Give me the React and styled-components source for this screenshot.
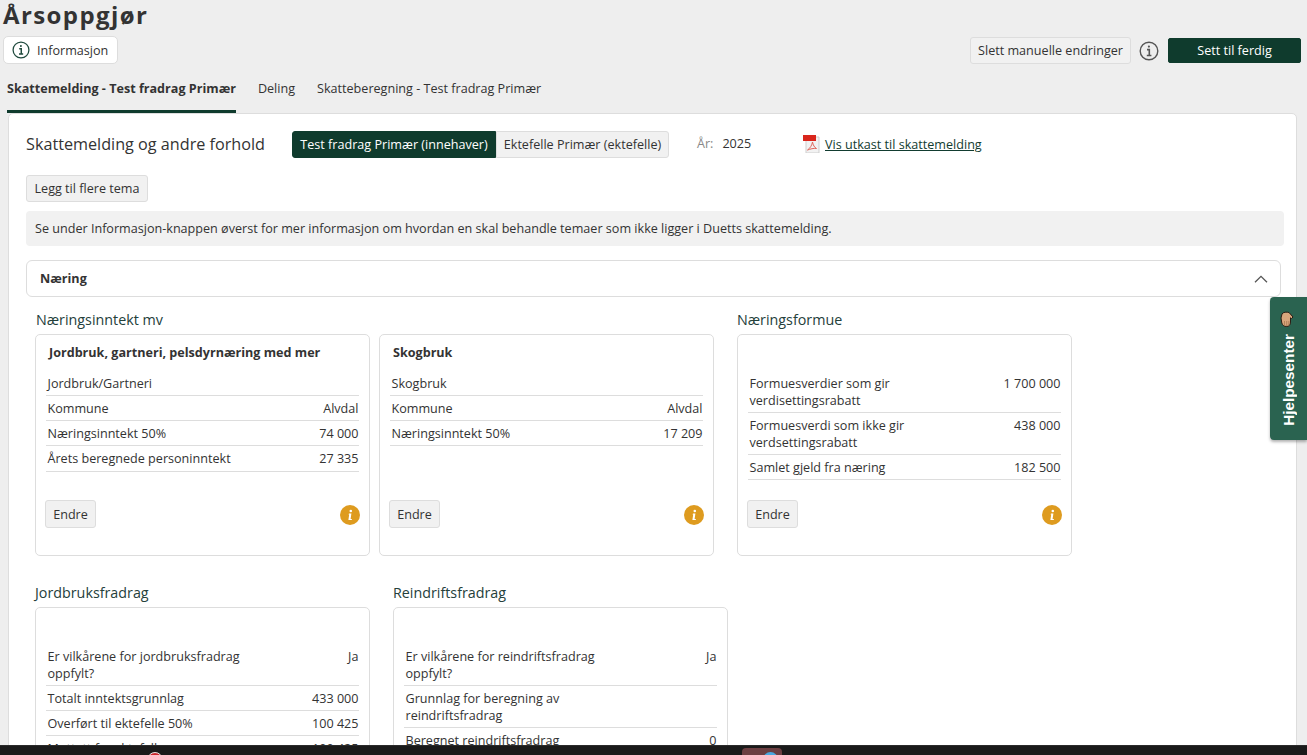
import styled, { createGlobalStyle } from 'styled-components';

const GlobalStyle = createGlobalStyle`
  html, body {
    margin: 0;
    padding: 0;
    height: 100%;
    overflow: hidden;
    background: #eeeeee;
    font-family: 'Open Sans', sans-serif;
    font-size: 12.6px;
    color: #333333;
  }
  * { box-sizing: border-box; }
`;

const Page = styled.div`
  height: 755px;
  display: flex;
  flex-direction: column;
  overflow: hidden;
  position: relative;
`;

const Scroll = styled.div`
  flex: 1;
  min-height: 0;
  overflow: hidden;
  padding: 0 10px 0 8px;
`;

const Title = styled.h1`
  margin: 0 0 0 -5px;
  height: 36px;
  font-size: 24px;
  line-height: 30px;
  font-weight: 700;
  letter-spacing: 1.4px;
  color: #333333;
`;

const HeaderRow = styled.div`
  display: flex;
  justify-content: space-between;
  align-items: flex-start;
  height: 37px;
  margin-left: -5px;
  margin-right: -4px;
`;

const InfoButton = styled.button`
  display: flex;
  align-items: center;
  gap: 7px;
  height: 28px;
  width: 115px;
  padding: 0 0 0 8px;
  background: #ffffff;
  border: 1px solid #dddddd;
  border-radius: 5px;
  font: 12.6px 'Open Sans', sans-serif;
  color: #333333;
`;

const Actions = styled.div`
  display: flex;
  align-items: center;
  margin-top: 1px;
`;

const Button = styled.button`
  width: ${p => p.$width}px;
  height: ${p => p.$height || 27}px;
  padding: 0;
  background: #f1f1f1;
  border: 1px solid #dddddd;
  border-radius: 3px;
  font: 12.6px 'Open Sans', sans-serif;
  color: #333333;
`;

const PrimaryButton = styled.button`
  width: 133px;
  height: 25px;
  margin-left: 9px;
  background: #0f3b2d;
  border: 1px solid #0f3b2d;
  border-radius: 2px;
  font: 12.6px 'Open Sans', sans-serif;
  color: #ffffff;
`;

const HelpIcon = styled.span`
  display: flex;
  margin-left: 8px;
`;

const Tabs = styled.nav`
  display: flex;
  gap: 22px;
  height: 40px;
  margin-left: -1px;
`;

const Tab = styled.div`
  height: 40px;
  padding-top: 7px;
  line-height: 17px;
  font-weight: ${p => p.$active ? 700 : 400};
  border-bottom: 3px solid ${p => p.$active ? '#0f3b2d' : 'transparent'};
  color: #333333;
`;

const Panel = styled.main`
  background: #ffffff;
  border: 1px solid #dddddd;
  border-radius: 5px 5px 0 0;
  padding: 16px 12px 0 17px;
  height: 800px;
`;

const PanelTop = styled.div`
  display: flex;
  align-items: center;
  height: 28px;
`;

const PanelHeading = styled.h2`
  margin: -1px 0 0;
  width: 266px;
  font-size: 16.2px;
  font-weight: 400;
  color: #333333;
`;

const Toggle = styled.div`
  display: flex;
  width: 377px;
  height: 27px;
`;

const ToggleItem = styled.div`
  display: flex;
  align-items: center;
  justify-content: center;
  flex: ${p => p.$active ? '0 0 204px' : '1'};
  background: ${p => p.$active ? '#0f3b2d' : '#f1f1f1'};
  color: ${p => p.$active ? '#ffffff' : '#333333'};
  border: 1px solid ${p => p.$active ? '#0f3b2d' : '#dddddd'};
  border-radius: ${p => p.$active ? '3px 0 0 3px' : '0 3px 3px 0'};
`;

const Year = styled.div`
  display: flex;
  gap: 9px;
  width: 106px;
  margin-left: 28px;
  margin-top: -2px;
`;

const YearLabel = styled.span`
  color: #888888;
`;

const PdfWrap = styled.div`
  display: flex;
  align-items: center;
  gap: 5px;
`;

const PdfLink = styled.a`
  color: #123c30;
  text-decoration: underline;
`;

const AddRow = styled.div`
  margin-top: 17px;
`;

const Notice = styled.div`
  display: flex;
  align-items: center;
  height: 35px;
  margin: 9px 0 14px;
  padding-left: 9px;
  background: #f1f1f1;
  border-radius: 4px;
`;

const Accordion = styled.div`
  display: flex;
  align-items: center;
  justify-content: space-between;
  height: 37px;
  width: 1255px;
  padding: 0 12px 0 13px;
  border: 1px solid #dddddd;
  border-radius: 6px;
  font-weight: 700;
`;

const Groups = styled.div`
  display: flex;
  gap: 23px;
  padding-left: 9px;
`;

const Group = styled.section`
  display: flex;
  flex-direction: column;
`;

const GroupTitle = styled.h3`
  margin: 0;
  height: 37px;
  padding: 13px 0 0 ${p => p.$indent ?? 1}px;
  font-size: 14.3px;
  line-height: 19px;
  font-weight: 400;
  color: #24403b;
`;

const Cards = styled.div`
  display: flex;
  gap: 9px;
`;

const Card = styled.article`
  position: relative;
  width: 335px;
  height: 222px;
  padding: 0 10px;
  border: 1px solid #dddddd;
  border-radius: 5px;
  background: #ffffff;
`;

const CardTitle = styled.div`
  height: 36px;
  padding: 9px 0 0 3px;
  line-height: 17px;
  font-weight: 700;
`;

const Row = styled.div`
  display: flex;
  justify-content: space-between;
  padding: 4px 0.5px ${p => p.$tall ? 4 : 3}px 1.5px;
  line-height: 17px;
  border-bottom: 1px solid #dddddd;
`;

const RowLabel = styled.span`
  max-width: 205px;
`;

const CardFooter = styled.div`
  position: absolute;
  left: 9px;
  right: 9px;
  top: 165px;
  display: flex;
  justify-content: space-between;
  align-items: flex-start;
`;

const Dot = styled.span`
  display: flex;
  margin-top: 5px;
`;

const Spacer = styled.div`
  height: 14px;
`;

const BottomBar = styled.div`
  flex: 0 0 10px;
  position: relative;
  background: #1a1a1a;
  border-top: 1px solid #2b2b2b;
  overflow: hidden;
`;

const RedDot = styled.span`
  position: absolute;
  left: 147px;
  top: 6px;
  width: 16px;
  height: 16px;
  border-radius: 50%;
  background: #c9262c;
  border: 1px solid #e6e6e6;
`;

const SwitchPill = styled.span`
  position: absolute;
  left: 742px;
  top: 2px;
  width: 40px;
  height: 16px;
  border-radius: 4px;
  background: #6d3f42;
`;

const SwitchKnob = styled.span`
  position: absolute;
  left: 763px;
  top: 6px;
  width: 15px;
  height: 15px;
  border-radius: 50%;
  background: #4aa8e0;
`;

const HelpTab = styled.aside`
  position: absolute;
  right: 0;
  top: 297px;
  width: 37px;
  height: 143px;
  display: flex;
  flex-direction: column;
  align-items: center;
  padding-top: 14px;
  gap: 7px;
  background: #2a6350;
  border-radius: 4px 0 0 4px;
  box-shadow: 0 2px 3px rgba(0, 0, 0, 0.3);
`;

const HandWrap = styled.span`
  display: flex;
  margin-left: -3px;
`;

const HelpLabel = styled.span`
  writing-mode: vertical-rl;
  transform: rotate(180deg);
  font: 700 15.3px 'Liberation Sans', sans-serif;
  color: #ffffff;
`;

const InfoCircle = ({ size, color }) => (
  <svg width={size} height={size} viewBox="0 0 20 20" fill="none" stroke={color} strokeWidth="1.4">
    <circle cx="10" cy="10" r="8.8" />
    <path d="M8 8.6h2.3v5.6M7.8 14.5h4.6" strokeWidth="1.6" />
    <circle cx="9.9" cy="5.6" r="1.1" fill={color} stroke="none" />
  </svg>
);

const OrangeInfo = () => (
  <svg width="20" height="20" viewBox="0 0 20 20">
    <circle cx="10" cy="10" r="10" fill="#de9b1f" />
    <path d="M9 8.5h2.4l-.8 5.5H12l-.3 1H8.4l.8-5.5H8.5z" fill="#fff" />
    <circle cx="10.8" cy="6" r="1.3" fill="#fff" />
  </svg>
);

const PdfIcon = () => (
  <svg width="17" height="18" viewBox="0 0 17 18">
    <path d="M3 2h13v16H3z" fill="#f2f2f2" stroke="#cfcfcf" />
    <path d="M0 0h13v6H0z" fill="#d9261c" />
    <path d="M9.5 7c-.6 3-2 6-5 8 3-1 6-2 9-1.5-2-1-3.5-3.5-4-6.5z" fill="none" stroke="#e0665c" strokeWidth="1" />
  </svg>
);

const Chevron = () => (
  <svg width="14" height="8" viewBox="0 0 14 8" fill="none" stroke="#555" strokeWidth="1.3">
    <path d="M1 7.3l6-6 6 6" />
  </svg>
);

const HandIcon = () => (
  <svg width="14" height="16" viewBox="0 0 14 16">
    <path d="M2 3C3 1 7 .8 9 1.5L13 6l-1.5 1.5-1-.7V11c0 3-1.5 4.500-4 4.500S2.500 14 1.800 12L1 7z" fill="#d9a67c" stroke="#2b1d14" strokeWidth="1" />
    <path d="M4.500 10v4.500M6.700 10v5M8.800 10v4.500" stroke="#a87850" strokeWidth=".8" fill="none" />
  </svg>
);

const DataCard = ({ title, rows, footer = true }) => (
  <Card>
    <CardTitle>{title}</CardTitle>
    {rows.map(([label, value, tall]) => (
      <Row key={label} $tall={tall}>
        <RowLabel>{label}</RowLabel>
        <span>{value}</span>
      </Row>
    ))}
    {footer && (
      <CardFooter>
        <Button $width={51} $height={28}>Endre</Button>
        <Dot><OrangeInfo /></Dot>
      </CardFooter>
    )}
  </Card>
);

export default function App() {
  return (
    <Page>
      <GlobalStyle />
      <Scroll>
        <Title>Årsoppgjør</Title>
        <HeaderRow>
          <InfoButton><InfoCircle size={18} color="#1f4a3d" />Informasjon</InfoButton>
          <Actions>
            <Button $width={161}>Slett manuelle endringer</Button>
            <HelpIcon><InfoCircle size={20} color="#555555" /></HelpIcon>
            <PrimaryButton>Sett til ferdig</PrimaryButton>
          </Actions>
        </HeaderRow>
        <Tabs>
          <Tab $active>Skattemelding - Test fradrag Primær</Tab>
          <Tab>Deling</Tab>
          <Tab>Skatteberegning - Test fradrag Primær</Tab>
        </Tabs>
        <Panel>
          <PanelTop>
            <PanelHeading>Skattemelding og andre forhold</PanelHeading>
            <Toggle>
              <ToggleItem $active>Test fradrag Primær (innehaver)</ToggleItem>
              <ToggleItem>Ektefelle Primær (ektefelle)</ToggleItem>
            </Toggle>
            <Year><YearLabel>År:</YearLabel><span>2025</span></Year>
            <PdfWrap>
              <PdfIcon />
              <PdfLink href="#">Vis utkast til skattemelding</PdfLink>
            </PdfWrap>
          </PanelTop>
          <AddRow><Button $width={122}>Legg til flere tema</Button></AddRow>
          <Notice>Se under Informasjon-knappen øverst for mer informasjon om hvordan en skal behandle temaer som ikke ligger i Duetts skattemelding.</Notice>
          <Accordion>Næring<Chevron /></Accordion>
          <Groups>
            <Group>
              <GroupTitle>Næringsinntekt mv</GroupTitle>
              <Cards>
                <DataCard
                  title="Jordbruk, gartneri, pelsdyrnæring med mer"
                  rows={[
                    ['Jordbruk/Gartneri', ''],
                    ['Kommune', 'Alvdal'],
                    ['Næringsinntekt 50%', '74 000'],
                    ['Årets beregnede personinntekt', '27 335', true],
                  ]}
                />
                <DataCard
                  title="Skogbruk"
                  rows={[
                    ['Skogbruk', ''],
                    ['Kommune', 'Alvdal'],
                    ['Næringsinntekt 50%', '17 209'],
                  ]}
                />
              </Cards>
            </Group>
            <Group>
              <GroupTitle $indent={0}>Næringsformue</GroupTitle>
              <DataCard
                rows={[
                  ['Formuesverdier som gir verdisettingsrabatt', '1 700 000'],
                  ['Formuesverdi som ikke gir verdsettingsrabatt', '438 000'],
                  ['Samlet gjeld fra næring', '182 500'],
                ]}
              />
            </Group>
          </Groups>
          <Spacer />
          <Groups>
            <Group>
              <GroupTitle $indent={0}>Jordbruksfradrag</GroupTitle>
              <DataCard
                footer={false}
                rows={[
                  ['Er vilkårene for jordbruksfradrag oppfylt?', 'Ja'],
                  ['Totalt inntektsgrunnlag', '433 000'],
                  ['Overført til ektefelle 50%', '100 425'],
                  ['Mottatt fra ektefelle', '100 425'],
                ]}
              />
            </Group>
            <Group>
              <GroupTitle $indent={0}>Reindriftsfradrag</GroupTitle>
              <DataCard
                footer={false}
                rows={[
                  ['Er vilkårene for reindriftsfradrag oppfylt?', 'Ja'],
                  ['Grunnlag for beregning av reindriftsfradrag', ''],
                  ['Beregnet reindriftsfradrag', '0'],
                ]}
              />
            </Group>
          </Groups>
        </Panel>
      </Scroll>
      <BottomBar>
        <RedDot />
        <SwitchPill />
        <SwitchKnob />
      </BottomBar>
      <HelpTab>
        <HandWrap><HandIcon /></HandWrap>
        <HelpLabel>Hjelpesenter</HelpLabel>
      </HelpTab>
    </Page>
  );
}
